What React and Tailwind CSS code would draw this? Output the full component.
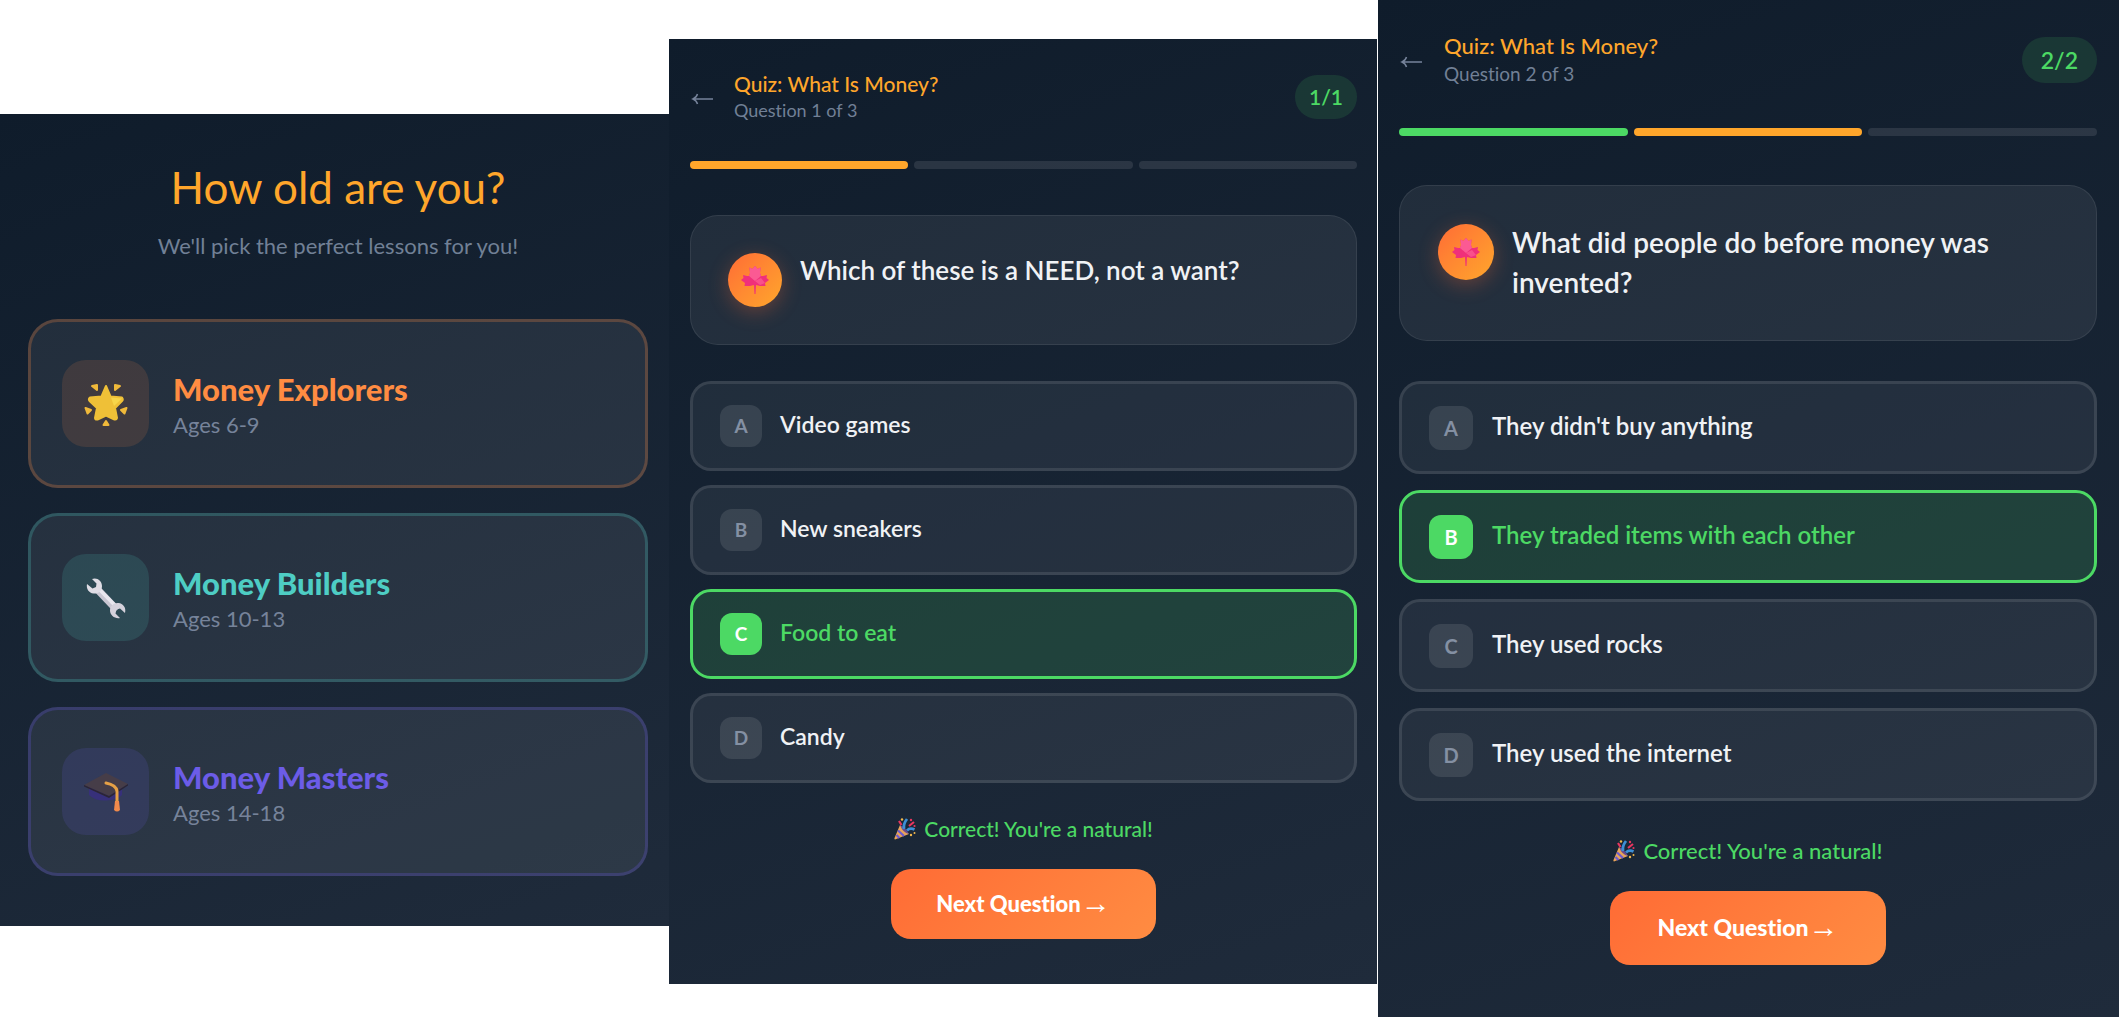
import clsx from 'clsx';

const tracks = [
  {
    name: 'Money Explorers',
    ages: 'Ages 6-9',
    icon: <StarIcon />,
    border: 'border-[#ff8c42]/25',
    tile: 'bg-[#ff8c42]/13',
    text: 'text-[#ff8c42]',
  },
  {
    name: 'Money Builders',
    ages: 'Ages 10-13',
    icon: <WrenchIcon />,
    border: 'border-[#4ecdc4]/25',
    tile: 'bg-[#4ecdc4]/15',
    text: 'text-[#4ecdc4]',
  },
  {
    name: 'Money Masters',
    ages: 'Ages 14-18',
    icon: <CapIcon />,
    border: 'border-[#6c5ce7]/25',
    tile: 'bg-[#6c5ce7]/15',
    text: 'text-[#6c5ce7]',
  },
];

const firstQuestion = {
  number: 1,
  score: '1/1',
  text: 'Which of these is a NEED, not a want?',
  options: ['Video games', 'New sneakers', 'Food to eat', 'Candy'],
  answer: 2,
  steps: ['current', 'todo', 'todo'],
};

const secondQuestion = {
  number: 2,
  score: '2/2',
  text: 'What did people do before money was invented?',
  options: [
    "They didn't buy anything",
    'They traded items with each other',
    'They used rocks',
    'They used the internet',
  ],
  answer: 1,
  steps: ['done', 'current', 'todo'],
};

// The second quiz screen is drawn a little larger than the first one
const compact = {
  page: 'pr-5 pb-[45px]',
  header: 'mb-[38px]',
  back: 'w-11',
  title: 'text-[21px] leading-[26px]',
  subtitle: 'text-[18px] leading-[26px]',
  badge: 'h-11 px-[14px] text-[21px]',
  progress: 'mb-[46px]',
  card: 'mb-9 p-[37px]',
  avatar: 'size-[54px]',
  question: 'text-[26px] leading-[38px]',
  options: 'gap-3.5',
  option: 'h-[90px] gap-[18px]',
  letter: 'size-[42px] text-[19px]',
  label: 'text-[23px]',
  feedback: 'mt-[30px] text-[21px]',
  next: 'h-[70px] px-[45px] text-[22px]',
};

const large = {
  page: 'pr-[22px] pb-[52px]',
  header: 'mb-10',
  back: 'w-[45px]',
  title: 'text-[22px] leading-[28px]',
  subtitle: 'text-[19px] leading-[28px]',
  badge: 'h-[46px] px-[19px] text-[23px]',
  progress: 'mb-[49px]',
  card: 'mb-10 p-[38px]',
  avatar: 'size-[56px]',
  question: 'text-[28px] leading-[40px]',
  options: 'gap-4',
  option: 'h-[93px] gap-[19px]',
  letter: 'size-11 text-[20px]',
  label: 'text-[24px]',
  feedback: 'mt-[34px] text-[22px]',
  next: 'h-[74px] px-[47px] text-[23px]',
};

function BackIcon() {
  return (
    <svg viewBox="0 0 24 16" className="h-4 w-6" aria-hidden="true">
      <path d="M23 8 H3 M7.500 3 Q6.500 6.500 3 8 Q6.500 9.500 7.500 13" fill="none" stroke="currentColor" strokeWidth="1.500" />
    </svg>
  );
}

function StarIcon() {
  return (
    <svg viewBox="0 0 44 44" className="size-11" aria-hidden="true">
      <path
        d="M22 4 L26.500 14.500 L38 15.500 Q39.500 17.500 38 19 L31 26 L33 36 Q32.500 38 30.500 37.500 L22 33.500 L13.500 37.500 Q11 38 11 36 L13 26 L5.500 19 Q4 17 6 15.500 L17.500 14.500 Z"
        fill="#efc037"
        stroke="#efc037"
        strokeWidth="2"
        strokeLinejoin="round"
      />
      <path d="M27 15.500 L38 16.500 L30 24 Z" fill="#f7d54a" />
      <g fill="#f0b93a" stroke="#f0b93a" strokeWidth="2" strokeLinejoin="round">
        <path d="M8 4 L13 3 L13 8 Z" />
        <path d="M36 4 L31 3 L31 8 Z" />
        <path d="M1.500 26 L7 28 L3.500 31.500 Z" />
        <path d="M42.500 26 L37 28 L40.500 31.500 Z" />
        <path d="M22 39 L24.500 43 L19.500 43 Z" />
      </g>
    </svg>
  );
}

function WrenchIcon() {
  return (
    <svg viewBox="0 0 44 44" className="size-11" aria-hidden="true">
      <path d="M13 13 L33 34" stroke="#c9c6d2" strokeWidth="7.500" />
      <path d="M14.500 12.500 L33.500 32" stroke="#e9e7ee" strokeWidth="3.500" />
      <path
        d="M8 3 C13 1 18 5 18 10 C18 15 14 18 9.500 17.500 C5 17 2 13 3 8 L8.500 12.500 L12 11 L12.500 7.500 Z"
        fill="#dfdde5"
      />
      <path
        d="M36 42 C31 43 26 39.500 26 34.500 C26 30 30 26.500 34.500 27 C39 27.500 42.500 31.500 41 37 L36 32.500 L32.500 33.500 L31.500 37.500 Z"
        fill="#d5d2dc"
      />
    </svg>
  );
}

function CapIcon() {
  return (
    <svg viewBox="0 0 44 44" className="size-11" aria-hidden="true">
      <path d="M5 17 L5 25 Q11 31 22 30.500 Q34 30 38 25 L38 16 Z" fill="#37307a" />
      <path d="M0 15 L22 3 L44 14 L25 26 Z" fill="#463d48" />
      <path d="M0 15 L25 26 L44 14 L44 15.500 L25 28 L0 16.500 Z" fill="#2b2535" />
      <path
        d="M22 13 Q32 15 33 21 L33 32"
        fill="none"
        stroke="#e6a046"
        strokeWidth="3"
        strokeLinecap="round"
      />
      <path d="M31 31 L35 31 L36 40 Q33 43 30 40 Z" fill="#f08a4b" />
    </svg>
  );
}

function LeafIcon() {
  return (
    <svg viewBox="0 0 28 30" className="h-[30px] w-7" aria-hidden="true">
      <path
        d="M14 1 L16.500 4 L19.500 2.500 L19 8 L20 11 L22 11 L26 10 L25.500 13 L28 15 L24 18 L24.500 21 L19 21 L15 20 L14.500 29 L13.500 29 L13 20 L9 21 L3.500 21 L4 18 L0 15 L2.500 13 L2 10 L6 11 L8 11 L9 8 L8.500 2.500 L11.500 4 Z"
        fill="#f0307a"
      />
      <path d="M14 1 L16.500 4 L19.500 2.500 L19 8 L20 11 L14 16 L8 11 L9 8 L8.500 2.500 L11.500 4 Z" fill="#fb5a93" />
      <path d="M14 16 L20 13 L24 18 L19 20 Z" fill="#f9508c" />
    </svg>
  );
}

function PartyIcon() {
  return (
    <svg viewBox="0 0 22 22" className="size-[22px]" aria-hidden="true">
      <path d="M6 7 L15 16 L1 21.500 Q0 21 0.500 20 Z" fill="#e9a45a" />
      <path d="M4 12.500 L10 18 M2.500 17 L5.500 20" stroke="#6d5bd0" strokeWidth="2.200" />
      <path d="M6 7 Q11 9 15 16 Q9 15 6 7 Z" fill="#6b4a8f" />
      <path d="M10 11 Q9 6 13 1" fill="none" stroke="#3d8fd6" strokeWidth="2.800" />
      <path d="M13 12.500 Q16 9.500 20.500 11.500" fill="none" stroke="#3d8fd6" strokeWidth="2.800" />
      <path d="M5 3 L7.500 7 M15 8 L20 4" stroke="#e8365f" strokeWidth="2.200" />
      <g fill="#f2b84b">
        <circle cx="8" cy="1.500" r="1.200" />
        <circle cx="17" cy="17" r="1.200" />
        <circle cx="20.500" cy="15" r="1" />
      </g>
      <circle cx="17" cy="2" r="1.200" fill="#e8365f" />
      <circle cx="20.500" cy="8" r="1.100" fill="#e8365f" />
    </svg>
  );
}

const AgePicker = () => (
  <section className="mt-[114px] bg-linear-160 from-[#0f1c2b] to-[#1f2b3b] pt-12 pr-[21px] pb-[50px] pl-7">
    <h1 className="text-center text-[44px] leading-[50px] text-[#ffa62b]">How old are you?</h1>
    <p className="mt-[19px] mb-[58px] text-center text-[22px] leading-[30px] text-[#718096]">
      We'll pick the perfect lessons for you!
    </p>
    <div className="flex flex-col gap-[25px]">
      {tracks.map((track) => (
        <button
          key={track.name}
          type="button"
          className={clsx(
            'flex h-[169px] items-center gap-6 rounded-[30px] border-3 bg-white/7 px-[31px] text-left',
            track.border
          )}
        >
          <span className={clsx('flex size-[87px] items-center justify-center rounded-3xl', track.tile)}>
            {track.icon}
          </span>
          <span className="flex flex-col pt-1">
            <span className={clsx('text-[31px] leading-[38px] font-black', track.text)}>{track.name}</span>
            <span className="text-[22px] leading-[34px] text-[#76839a]">{track.ages}</span>
          </span>
        </button>
      ))}
    </div>
  </section>
);

const Quiz = ({ quiz, size, className }) => (
  <section
    className={clsx('bg-linear-160 from-[#0f1c2b] to-[#1f2b3b] pt-8 pl-[21px]', size.page, className)}
  >
    <header className={clsx('flex items-center', size.header)}>
      <button type="button" aria-label="Back" className={clsx('pt-1 text-[#76839a]', size.back)}>
        <BackIcon />
      </button>
      <div className="flex-1">
        <h2 className={clsx('font-medium text-[#ffa62b]', size.title)}>Quiz: What Is Money?</h2>
        <p className={clsx('text-[#718096]', size.subtitle)}>Question {quiz.number} of 3</p>
      </div>
      <span className={clsx('flex items-center rounded-full bg-[#4cd964]/13 font-semibold text-[#4cd964]', size.badge)}>
        {quiz.score}
      </span>
    </header>

    <div className={clsx('flex gap-1.5', size.progress)}>
      {quiz.steps.map((step, i) => (
        <div
          key={i}
          className={clsx('h-2 flex-1 rounded', {
            'bg-[#4cd964]': step === 'done',
            'bg-[#ffa62b]': step === 'current',
            'bg-white/10': step === 'todo',
          })}
        />
      ))}
    </div>

    <div className={clsx('flex items-start gap-[18px] rounded-[28px] border border-white/8 bg-white/7', size.card)}>
      <div
        className={clsx(
          'flex shrink-0 items-center justify-center rounded-full bg-linear-135 from-[#ff6b35] to-[#ffa62b] shadow-[0_5px_20px_rgba(255,107,53,0.3)]',
          size.avatar
        )}
      >
        <LeafIcon />
      </div>
      <h3 className={clsx('-mt-0.5 font-semibold text-[#f0f2f5]', size.question)}>{quiz.text}</h3>
    </div>

    <div className={clsx('flex flex-col', size.options)}>
      {quiz.options.map((option, i) => {
        const correct = i === quiz.answer;
        return (
          <button
            key={option}
            type="button"
            className={clsx(
              'flex items-center rounded-[21px] border-3 px-[27px] text-left',
              correct ? 'border-[#4cd964] bg-[#4cd964]/16' : 'border-white/10 bg-white/6',
              size.option
            )}
          >
            <span
              className={clsx(
                'flex items-center justify-center rounded-xl font-bold',
                correct ? 'bg-[#4cd964] text-white' : 'bg-white/10 text-[#8490a3]',
                size.letter
              )}
            >
              {'ABCD'[i]}
            </span>
            <span className={clsx('pb-1 font-semibold', correct ? 'text-[#4cd964]' : 'text-[#f0f2f5]', size.label)}>
              {option}
            </span>
          </button>
        );
      })}
    </div>

    <p className={clsx('flex items-center justify-center gap-2 leading-[32px] font-medium text-[#4cd964]', size.feedback)}>
      <PartyIcon /> Correct! You're a natural!
    </p>
    <button
      type="button"
      className={clsx(
        'mx-auto mt-6 flex items-center rounded-[20px] bg-linear-135 from-[#ff6b35] to-[#ff8c42] pb-0.5 font-black text-white',
        size.next
      )}
    >
      Next Question <span className="font-[Liberation_Sans,sans-serif] text-[30px] leading-none font-normal">→</span>
    </button>
  </section>
);

export default function App() {
  return (
    <main className="grid min-h-screen grid-cols-[669fr_709fr_741fr] items-start bg-white font-[Lato,sans-serif] [font-variant-ligatures:none]">
      <AgePicker />
      <Quiz quiz={firstQuestion} size={compact} className="mt-[39px] mr-px" />
      <Quiz quiz={secondQuestion} size={large} />
    </main>
  );
}
